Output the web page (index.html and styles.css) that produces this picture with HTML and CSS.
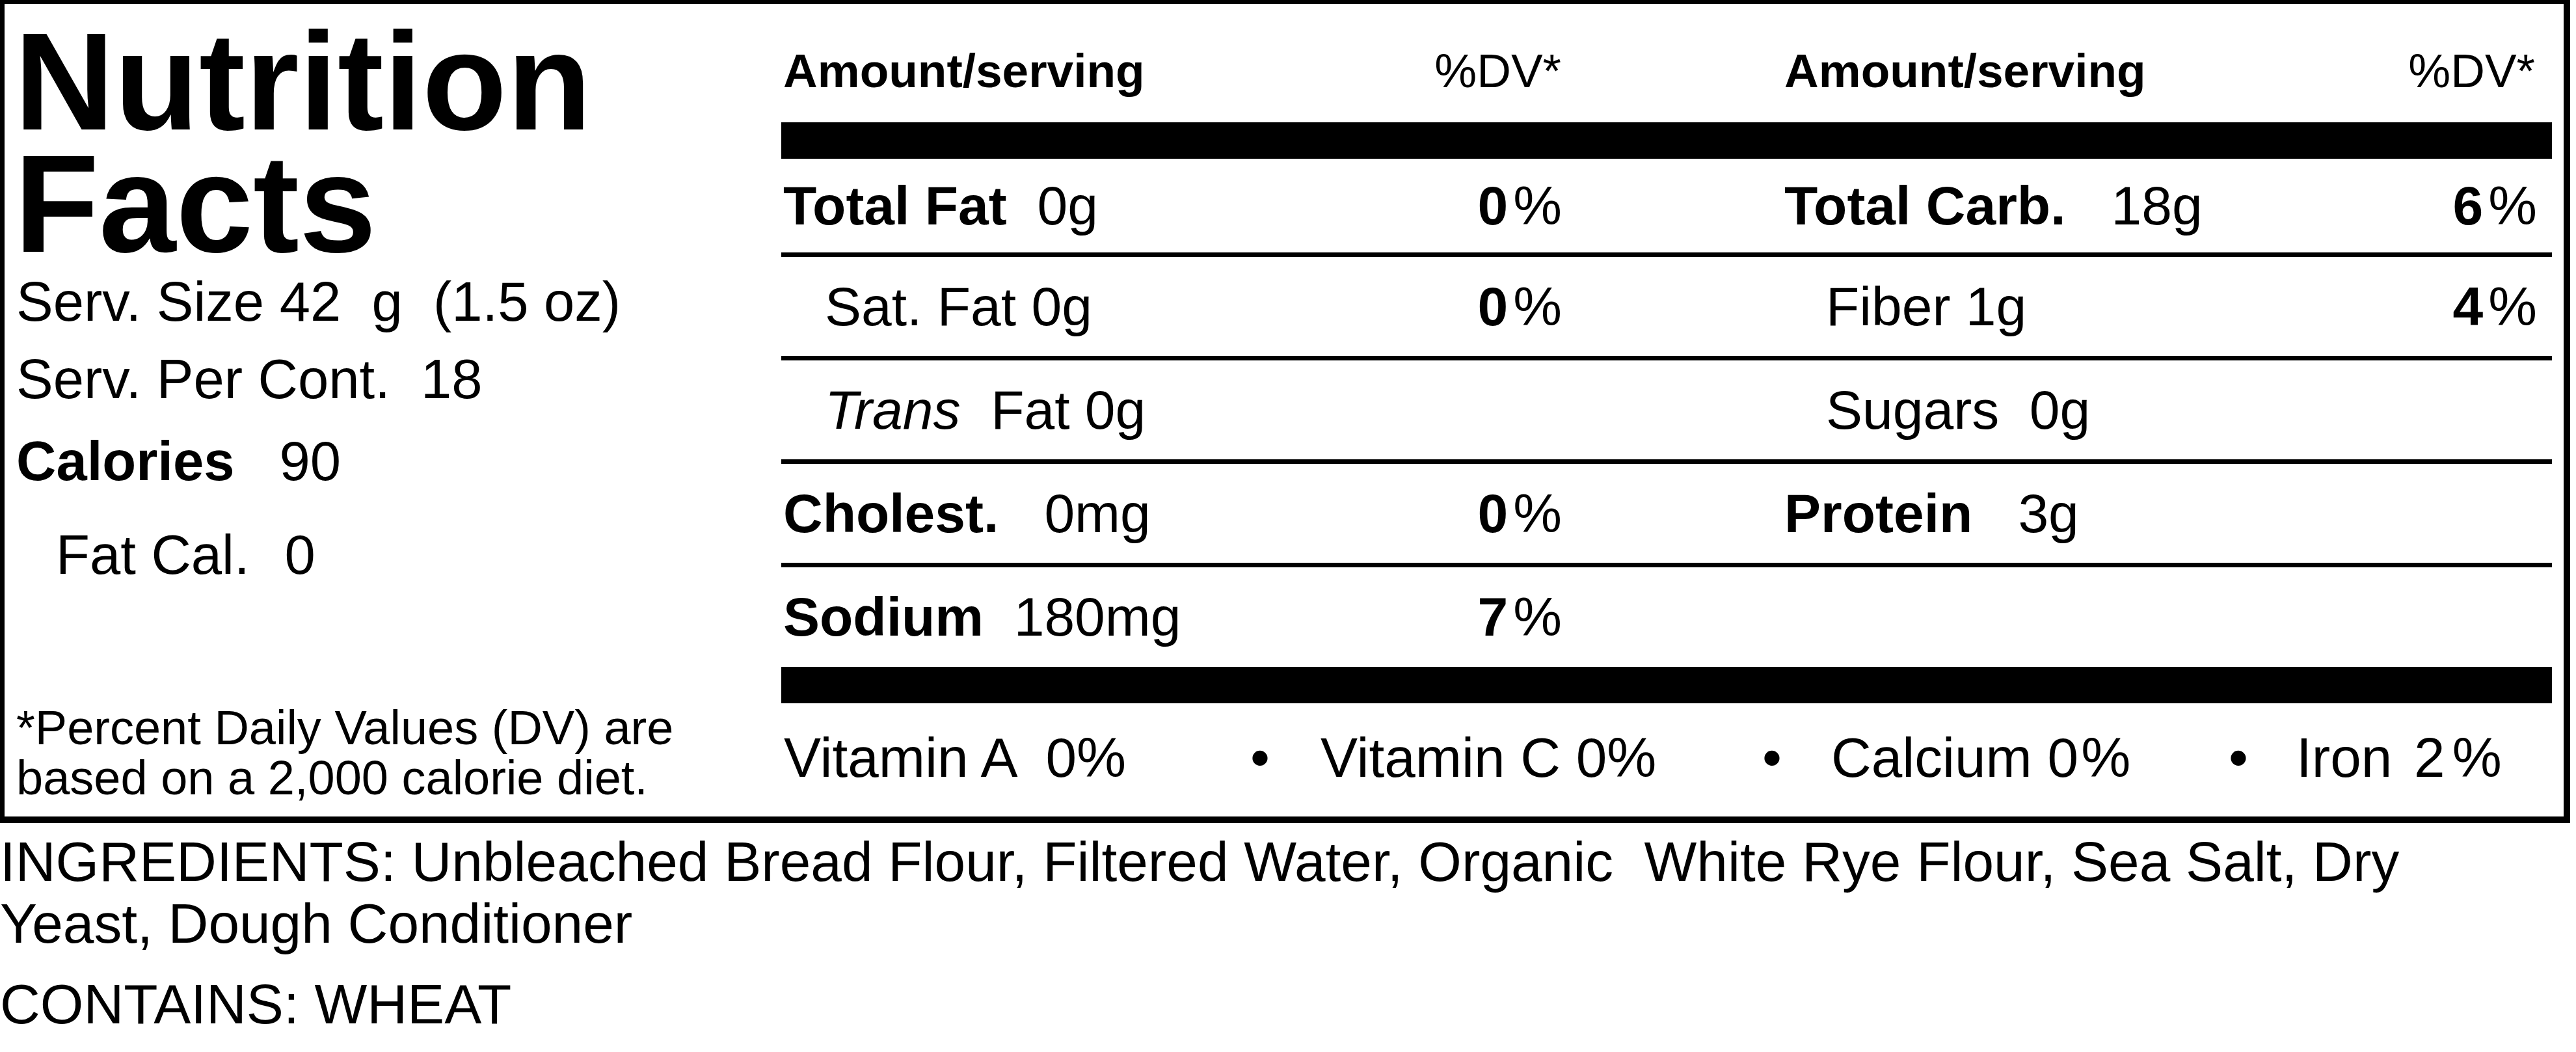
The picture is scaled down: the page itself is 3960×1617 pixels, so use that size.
FILE: index.html
```html
<!DOCTYPE html>
<html lang="en">
<head>
<meta charset="utf-8">
<title>Nutrition Facts</title>
<link rel="stylesheet" href="styles.css">
</head>
<body>
<div class="label">
  <div class="left">
    <h1 class="title">Nutrition<br>Facts</h1>
    <p class="info serv-size">Serv. Size 42  g  (1.5 oz)</p>
    <p class="info serv-cont">Serv. Per Cont.  18</p>
    <p class="info calories"><b>Calories</b><span class="cal-v">90</span></p>
    <p class="info fatcal">Fat Cal.<span class="fat-v">0</span></p>
    <p class="foot">*Percent Daily Values (DV) are<br>based on a 2,000 calorie diet.</p>
  </div>
  <div class="right">
    <div class="hdr">
      <div class="half l"><b>Amount/serving</b><span>%DV*</span></div>
      <div class="half r"><b>Amount/serving</b><span>%DV*</span></div>
    </div>
    <div class="bar"></div>
    <div class="row first">
      <div class="half l"><span><b>Total Fat</b>  0g</span><span><b>0</b><span class="pc">%</span></span></div>
      <div class="half r"><span><b>Total Carb.</b>   18g</span><span><b>6</b><span class="pc">%</span></span></div>
    </div>
    <div class="row">
      <div class="half l"><span class="sub">Sat. Fat 0g</span><span><b>0</b><span class="pc">%</span></span></div>
      <div class="half r"><span class="sub">Fiber 1g</span><span><b>4</b><span class="pc">%</span></span></div>
    </div>
    <div class="row">
      <div class="half l"><span class="sub"><i>Trans</i>  Fat 0g</span></div>
      <div class="half r"><span class="sub">Sugars  0g</span></div>
    </div>
    <div class="row">
      <div class="half l"><span><b>Cholest.</b>   0mg</span><span><b>0</b><span class="pc">%</span></span></div>
      <div class="half r"><span><b>Protein</b>   3g</span></div>
    </div>
    <div class="row last">
      <div class="half l"><span><b>Sodium</b>  180mg</span><span><b>7</b><span class="pc">%</span></span></div>
      <div class="half r"></div>
    </div>
    <div class="bar"></div>
    <div class="vits">
      <span>Vitamin A  0%</span>
      <span class="dot">•</span>
      <span>Vitamin C 0%</span>
      <span class="dot">•</span>
      <span>Calcium 0<span class="vpc">%</span></span>
      <span class="dot">•</span>
      <span>Iron <span class="iron-v">2</span><span class="vpc wide">%</span></span>
    </div>
  </div>
</div>
<p class="ingr">INGREDIENTS: Unbleached Bread Flour, Filtered Water, Organic  White Rye Flour, Sea Salt, Dry Yeast, Dough Conditioner</p>
<p class="ingr contains">CONTAINS: WHEAT</p>
</body>
</html>
```

FILE: styles.css
```css
html, body {
  margin: 0;
  padding: 0;
  background: #fff;
  color: #000;
  font-family: "Liberation Sans", Arial, sans-serif;
}

.label {
  display: flex;
  width: 3951px;
  height: 1265px;
  box-sizing: border-box;
  border-style: solid;
  border-color: #000;
  border-width: 6px 10px 10px 7px;
}

/* left panel */
.left {
  width: 1194px;
  box-sizing: border-box;
  display: flex;
  flex-direction: column;
  padding: 25px 0 21px 18px;
}

.title {
  margin: 0 0 0 -3px;
  font-size: 213px;
  line-height: 188px;
  font-weight: bold;
}

.info {
  margin: 0;
  font-size: 85px;
  line-height: 100px;
  white-space: pre;
}

.serv-size { margin-top: 7px; }
.serv-cont { margin-top: 19px; }
.calories { margin-top: 26px; }
.fatcal { margin-top: 44px; padding-left: 61px; }

.cal-v { margin-left: 69px; }
.fat-v { margin-left: 54px; }

.foot {
  margin: auto 0 0 0;
  font-size: 74px;
  line-height: 77px;
}

/* right panel */
.right {
  width: 2740px;
  box-sizing: border-box;
  padding-right: 18px;
}

.hdr {
  display: grid;
  grid-template-columns: 1539px 1183px;
  height: 182px;
  box-sizing: border-box;
  padding-top: 63px;
  font-size: 73px;
  line-height: 80px;
}

.half {
  display: flex;
  justify-content: space-between;
  white-space: pre;
}

.half.l { padding: 0 339px 0 3px; }
.half.r { padding: 0 23px 0 3px; }
.hdr .half.l { padding-right: 340px; }
.hdr .half.r { padding-right: 26px; }

.bar {
  height: 56px;
  background: #000;
}

.row {
  display: grid;
  grid-template-columns: 1539px 1183px;
  height: 152px;
  line-height: 152px;
  font-size: 84px;
  border-bottom: 7px solid #000;
}

.row.first {
  height: 144px;
  line-height: 144px;
}

.row.last {
  height: 153px;
  line-height: 153px;
  border-bottom: 0;
}

.sub { padding-left: 64px; }

.pc { margin-left: 8px; }

.vits {
  display: grid;
  grid-template-columns: 717px 108px 679px 106px 611px 104px auto;
  height: 174px;
  line-height: 168px;
  font-size: 85.5px;
  padding-left: 4px;
  white-space: pre;
}

.vpc { margin-left: 4px; }
.vpc.wide { margin-left: 11px; }
.iron-v { margin-left: 10px; }

/* ingredients */
.ingr {
  width: 3800px;
  margin: 12px 0 0 0;
  font-size: 85.6px;
  line-height: 95px;
  white-space: pre-wrap;
}

.ingr.contains { margin-top: 29px; }
```
